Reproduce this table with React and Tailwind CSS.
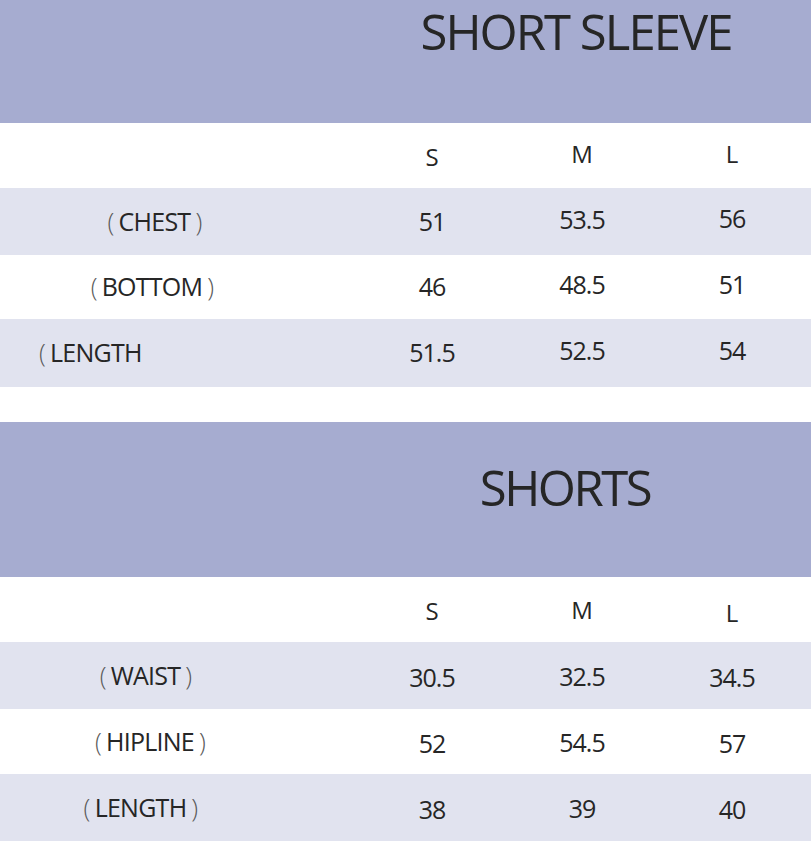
import React from 'react';

const sleeveRows = [
  { label: 'CHEST', close: true, shift: 'ml-[9px]', values: ['51', '53.5', '56'], h: 'h-[67px]', bg: 'bg-[#e1e3ef]' },
  { label: 'BOTTOM', close: true, shift: 'ml-[4px]', values: ['46', '48.5', '51'], h: 'h-[64px]', bg: 'bg-white' },
  { label: 'LENGTH', close: false, left: true, values: ['51.5', '52.5', '54'], h: 'h-[68px]', bg: 'bg-[#e1e3ef]' },
];

const shortsRows = [
  { label: 'WAIST', close: true, shift: '-ml-[9px]', values: ['30.5', '32.5', '34.5'], h: 'h-[67px]', bg: 'bg-[#e1e3ef]' },
  { label: 'HIPLINE', close: true, shift: '', values: ['52', '54.5', '57'], h: 'h-[65px]', bg: 'bg-white' },
  { label: 'LENGTH', close: true, shift: '-ml-[19px]', values: ['38', '39', '40'], h: 'h-[67px]', bg: 'bg-[#e1e3ef]' },
];

// one row of the size chart
const Row = ({ row, cols }) => (
  <div className={`grid grid-cols-[357px_150px_150px_150px] items-center ${row.h} ${row.bg}`}>
    <div className={`flex items-center ${row.left ? 'justify-start pl-[39px]' : 'justify-center pr-[57px]'}`}>
      <span className={`text-[25px] tracking-[-0.03em] ${row.shift || ''}`}>
        <span className="font-light text-[#5a5a5a]">(</span>
        <span className="ml-[5px]">{row.label}</span>
        {row.close && <span className="font-light text-[#5a5a5a] ml-[5px]">)</span>}
      </span>
    </div>
    {row.values.map((v, i) => (
      <div key={i} className={`text-center text-[25px] tracking-[-0.04em] ${cols[i]}`}>
        {v}
      </div>
    ))}
  </div>
);

const SizeHeader = ({ h, cols }) => (
  <div className={`grid grid-cols-[357px_150px_150px_150px] items-center ${h} bg-white`}>
    <div />
    {['S', 'M', 'L'].map((s, i) => (
      <div key={s} className={`text-center text-[24px] ${cols[i]}`}>{s}</div>
    ))}
  </div>
);

export default function App() {
  return (
    <div className="w-[811px] h-[847px] bg-white text-[#262626] font-['Open_Sans',sans-serif] overflow-hidden">
      {/* short sleeve */}
      <div className="h-[123px] bg-[#a6acd0] pl-[341px] text-center">
        <h1 className="text-[49px] leading-[60px] pt-[1px] tracking-[-0.04em]">SHORT SLEEVE</h1>
      </div>
      <SizeHeader h="h-[65px]" cols={['mt-[2px]', '-mt-[3px]', '-mt-[3px]']} />
      {sleeveRows.map((r, i) => (
        <Row key={i} row={r} cols={['', '-mt-[4px]', '-mt-[5px]']} />
      ))}

      <div className="h-[35px]" />

      {/* shorts */}
      <div className="h-[155px] bg-[#a6acd0] pl-[319px] pt-[35px] text-center">
        <h1 className="text-[49px] leading-[60px] tracking-[-0.05em]">SHORTS</h1>
      </div>
      <SizeHeader h="h-[65px]" cols={['mt-[3px]', '', 'mt-[6px]']} />
      {shortsRows.map((r, i) => (
        <Row key={i} row={r} cols={['mt-[4px]', 'mt-[2px]', 'mt-[5px]']} />
      ))}
    </div>
  );
}
